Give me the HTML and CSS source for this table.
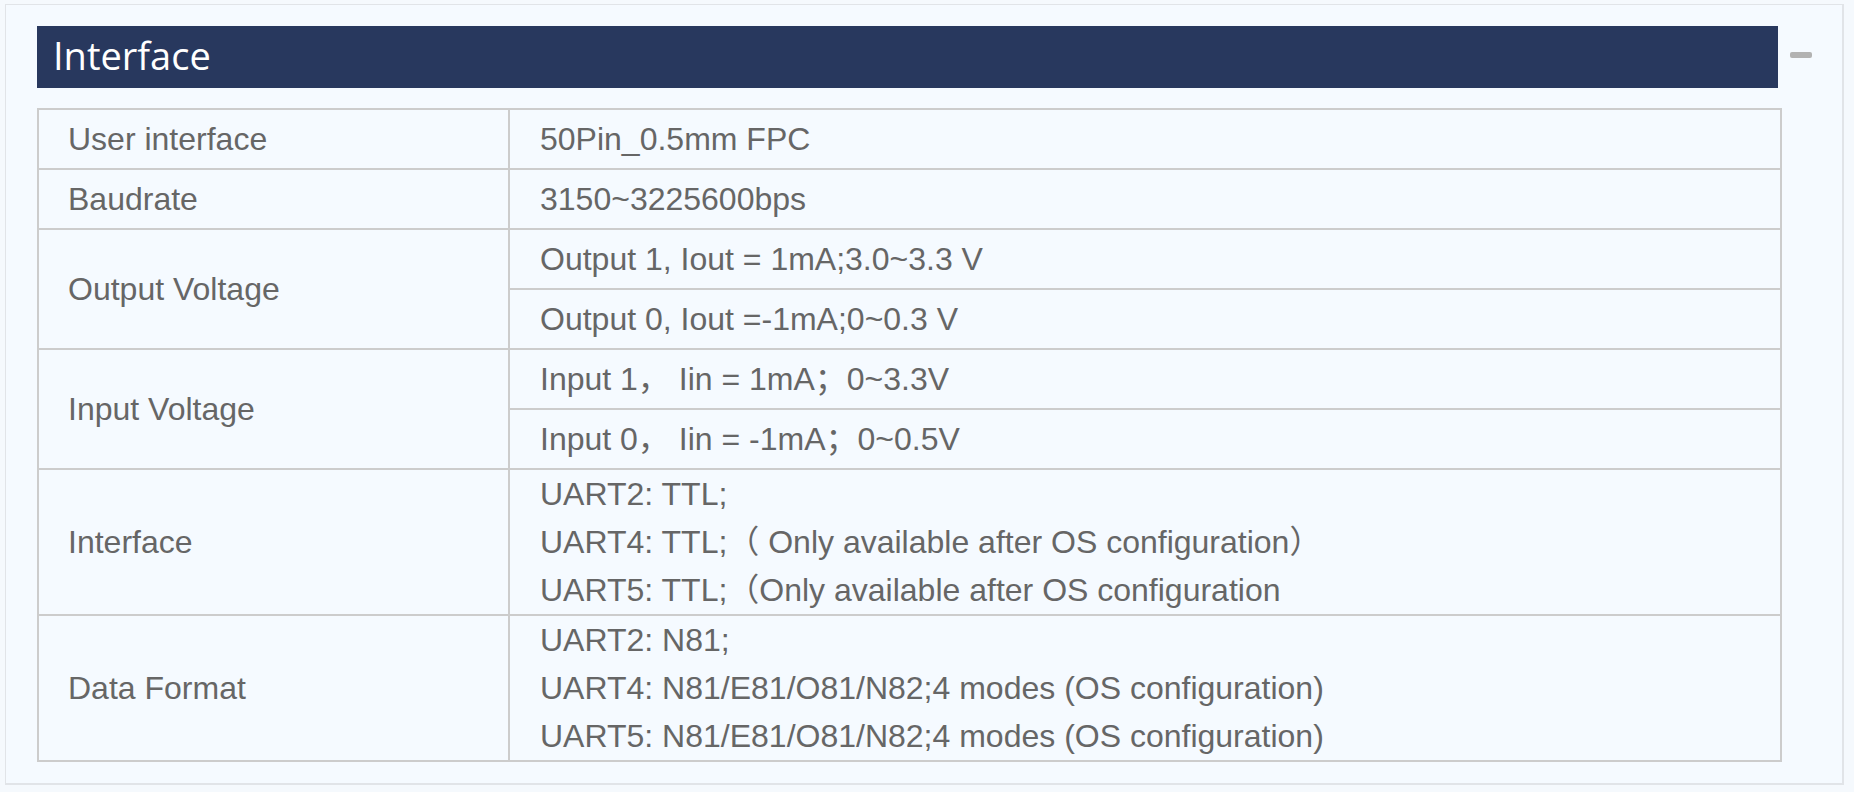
FILE: index.html
```html
<!DOCTYPE html>
<html lang="en">
<head>
<meta charset="utf-8">
<title>Interface</title>
<link rel="stylesheet" href="styles.css">
</head>
<body>
<section class="panel">
  <div class="panel-head">
    <h2 class="panel-title">Interface</h2>
    <span class="collapse" aria-label="collapse"></span>
  </div>
  <table class="spec">
    <colgroup><col class="col-key"><col class="col-val"></colgroup>
    <tbody>
      <tr><td class="key">User interface</td><td class="val">50Pin_0.5mm FPC</td></tr>
      <tr><td class="key">Baudrate</td><td class="val">3150~3225600bps</td></tr>
      <tr><td class="key" rowspan="2">Output Voltage</td><td class="val">Output 1, Iout = 1mA;3.0~3.3 V</td></tr>
      <tr><td class="val">Output 0, Iout =-1mA;0~0.3 V</td></tr>
      <tr><td class="key" rowspan="2">Input Voltage</td><td class="val">Input 1， Iin = 1mA；0~3.3V</td></tr>
      <tr><td class="val">Input 0， Iin = -1mA；0~0.5V</td></tr>
      <tr><td class="key">Interface</td><td class="val multi"><div>UART2: TTL;</div><div>UART4: TTL;（ Only available after OS configuration）</div><div>UART5: TTL;（Only available after OS configuration</div></td></tr>
      <tr><td class="key">Data Format</td><td class="val multi"><div>UART2: N81;</div><div>UART4: N81/E81/O81/N82;4 modes (OS configuration)</div><div>UART5: N81/E81/O81/N82;4 modes (OS configuration)</div></td></tr>
    </tbody>
  </table>
</section>
</body>
</html>
```

FILE: styles.css
```css
html, body {
  margin: 0;
  padding: 0;
  background: #f5f9fd;
}

.panel {
  box-sizing: border-box;
  width: 1839px;
  margin: 4px 0 0 5px;
  padding: 21px 0 21px 31px;
  border-style: solid;
  border-color: #e1e4e8;
  border-width: 1px 2px 2px 1px;
  background: #f5faff;
}

.panel-head {
  display: flex;
  align-items: flex-start;
}

.panel-title {
  box-sizing: border-box;
  width: 1741px;
  height: 62px;
  margin: 0;
  padding: 0 0 4px 16px;
  background: #28385e;
  color: #ffffff;
  font-family: "Open Sans", "Noto Sans", sans-serif;
  font-weight: 400;
  font-size: 38px;
  line-height: 58px;
}

.collapse {
  display: block;
  width: 22px;
  height: 6px;
  margin: 26px 0 0 12px;
  border-radius: 2px;
  background: #b2b2b2;
}

.spec {
  margin-top: 20px;
  width: 1745px;
  table-layout: fixed;
  border-collapse: separate;
  border-spacing: 0;
  border-top: 2px solid #cccccc;
  border-left: 2px solid #cccccc;
  font-family: "Liberation Sans", Arial, "Noto Sans CJK SC", sans-serif;
  font-size: 32px;
  color: #666666;
}

.col-key {
  width: 471px;
}

.spec td {
  box-sizing: border-box;
  padding: 5px 0 5px 29px;
  line-height: 48px;
  vertical-align: middle;
  border-right: 2px solid #cccccc;
  border-bottom: 2px solid #cccccc;
  white-space: nowrap;
}

.spec td.val {
  padding-left: 30px;
}

.spec td.multi {
  padding-top: 0;
  padding-bottom: 0;
}
```
